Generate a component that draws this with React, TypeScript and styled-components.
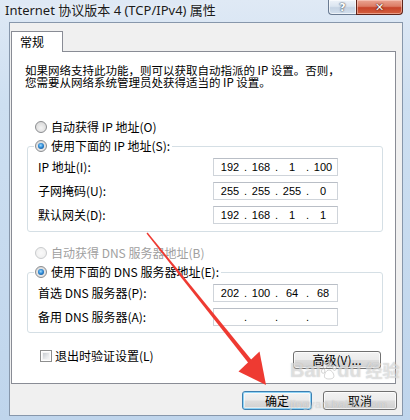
import styled, { createGlobalStyle } from "styled-components"

const GlobalStyle = createGlobalStyle`
  html, body {
    margin: 0;
    padding: 0;
    background: #ffffff;
  }
  body {
    font-family: "Noto Sans CJK SC", "Noto Sans", sans-serif;
    color: #000;
  }
`

const CJK = `"Noto Sans CJK SC", "Noto Sans", sans-serif`

interface IpProps {
  parts: string[]
}

const IpInput = ({ parts }: IpProps) => (
  <IpBox>
    {parts.map((p, i) => (
      <IpSegment key={i}>
        <Octet>{p}</Octet>
        {i < 3 && <Dot>.</Dot>}
      </IpSegment>
    ))}
  </IpBox>
)

interface RadioProps {
  label: string
  checked?: boolean
  disabled?: boolean
}

const Radio = ({ label, checked, disabled }: RadioProps) => (
  <RadioLabel $disabled={disabled}>
    <RadioCircle $checked={checked} $disabled={disabled} />
    {label}
  </RadioLabel>
)

const PawIcon = () => (
  <svg width="16" height="20" viewBox="0 0 16 20">
    <g fill="rgba(255,255,255,0.6)" stroke="rgba(140,140,140,0.45)" strokeWidth="0.8">
      <ellipse cx="4" cy="5" rx="2" ry="2.6" />
      <ellipse cx="9" cy="3.5" rx="2" ry="2.6" />
      <ellipse cx="13.5" cy="7" rx="1.8" ry="2.4" />
      <ellipse cx="2.2" cy="10" rx="1.7" ry="2.3" />
      <path d="M8 9 C11 9 14 14 12.5 16.5 C11 18.5 5 18.5 3.8 16.5 C2.5 14 5 9 8 9 Z" />
    </g>
  </svg>
)

const RedArrow = () => (
  <ArrowLayer width="410" height="420" viewBox="0 0 410 420">
    <polygon
      points="146.5,233.4 147.6,232.6 253.6,362.6 250.4,365.4"
      fill="#ee3a32"
    />
    <polygon points="266,385 238.5,371.5 259.5,351.5" fill="#ee3a32" />
  </ArrowLayer>
)

export default function App() {
  return (
    <>
      <GlobalStyle />
      <Window>
        <TitleBar>
          <Title>Internet 协议版本 4 (TCP/IPv4) 属性</Title>
          <CaptionButtons>
            <HelpButton>?</HelpButton>
            <CloseButton>✕</CloseButton>
          </CaptionButtons>
        </TitleBar>
        <Body>
          <TabStrip>
            <Tab>常规</Tab>
          </TabStrip>
          <Panel>
            <Description>
              <DescLine>如果网络支持此功能，则可以获取自动指派的 IP 设置。否则，</DescLine>
              <DescLine>您需要从网络系统管理员处获得适当的 IP 设置。</DescLine>
            </Description>
            <RadioRow $top={31}>
              <Radio label="自动获得 IP 地址(O)" />
            </RadioRow>
            <GroupBox $top={11} $height={86}>
              <Legend>
                <Radio label="使用下面的 IP 地址(S):" checked />
              </Legend>
              <FieldGrid>
                <FieldLabel>IP 地址(I):</FieldLabel>
                <IpInput parts={["192", "168", "1", "100"]} />
                <FieldLabel>子网掩码(U):</FieldLabel>
                <IpInput parts={["255", "255", "255", "0"]} />
                <FieldLabel>默认网关(D):</FieldLabel>
                <IpInput parts={["192", "168", "1", "1"]} />
              </FieldGrid>
            </GroupBox>
            <RadioRow $top={13}>
              <Radio label="自动获得 DNS 服务器地址(B)" disabled />
            </RadioRow>
            <GroupBox $top={11} $height={61}>
              <Legend>
                <Radio label="使用下面的 DNS 服务器地址(E):" checked />
              </Legend>
              <FieldGrid>
                <FieldLabel>首选 DNS 服务器(P):</FieldLabel>
                <IpInput parts={["202", "100", "64", "68"]} />
                <FieldLabel>备用 DNS 服务器(A):</FieldLabel>
                <IpInput parts={["", "", "", ""]} />
              </FieldGrid>
            </GroupBox>
            <OptionsRow>
              <CheckLabel>
                <CheckBox />
                退出时验证设置(L)
              </CheckLabel>
              <AdvancedButton>高级(V)...</AdvancedButton>
            </OptionsRow>
          </Panel>
          <Footer>
            <DialogButton $width={70} $default>确定</DialogButton>
            <DialogButton $width={74}>取消</DialogButton>
          </Footer>
        </Body>
        <Watermark>
          <WatermarkLogo>
            Bai
            <PawIcon />
            du
            <WatermarkCn>经验</WatermarkCn>
          </WatermarkLogo>
          <WatermarkUrl>jingyan.baidu.com</WatermarkUrl>
        </Watermark>
        <RedArrow />
      </Window>
    </>
  )
}

const Window = styled.div`
  position: relative;
  width: 410px;
  height: 420px;
  overflow: hidden;
  display: flex;
  flex-direction: column;
  background: linear-gradient(180deg, #dfe9f5 0%, #cddff1 25%, #bfd5ec 100%);
`

const TitleBar = styled.div`
  height: 22px;
  flex: none;
  display: flex;
  align-items: flex-start;
`

const Title = styled.div`
  padding-left: 5px;
  font-family: "Noto Sans", ${CJK};
  font-size: 13px;
  line-height: 20px;
  color: #1b1b1b;
  text-shadow: 0 0 6px rgba(255, 255, 255, 0.9);
  white-space: nowrap;
`

const CaptionButtons = styled.div`
  margin-left: auto;
  margin-right: 7px;
  display: flex;
`

const CaptionBase = styled.div`
  height: 15px;
  box-sizing: border-box;
  display: flex;
  align-items: center;
  justify-content: center;
  color: #ffffff;
  font-family: "DejaVu Sans", sans-serif;
  font-weight: bold;
  font-size: 11px;
  line-height: 1;
`

const HelpButton = styled(CaptionBase)`
  width: 28px;
  border: 1px solid #6a7b92;
  border-top: none;
  border-right: none;
  border-radius: 0 0 0 4px;
  background: linear-gradient(180deg, #eef3f9 0%, #dbe5f0 45%, #c5d3e3 55%, #d3e0ee 100%);
  box-shadow: inset 0 0 0 1px rgba(255, 255, 255, 0.6);
  text-shadow: 0 0 1px #3a4657, 0 0 2px #3a4657;
`

const CloseButton = styled(CaptionBase)`
  width: 47px;
  border: 1px solid #5e241a;
  border-top: none;
  border-radius: 0 0 4px 0;
  background: linear-gradient(180deg, #eaa493 0%, #dc7c65 45%, #c7432a 55%, #d4613f 100%);
  box-shadow: inset 0 0 0 1px rgba(255, 220, 210, 0.5);
  text-shadow: 0 0 1px #4a1208, 0 0 2px #4a1208;
  font-size: 11px;
`

const Body = styled.div`
  flex: 1;
  margin: 0 7px 4px 9px;
  background: #f0f0f0;
  border: 1px solid #8797ab;
  display: flex;
  flex-direction: column;
`

const TabStrip = styled.div`
  display: flex;
  padding: 8px 0 0 1px;
`

const Tab = styled.div`
  position: relative;
  z-index: 1;
  width: 52px;
  height: 21px;
  box-sizing: border-box;
  margin-bottom: -1px;
  padding-left: 8px;
  border: 1px solid #898c95;
  border-bottom: none;
  background: #ffffff;
  font-size: 12px;
  line-height: 20px;
`

const Panel = styled.div`
  margin-left: 1px;
  width: 385px;
  height: 333px;
  box-sizing: border-box;
  border: 1px solid #898c95;
  background: #ffffff;
  display: flex;
  flex-direction: column;
`

const Description = styled.div`
  margin: 12px 0 0 13px;
  display: flex;
  flex-direction: column;
`

const DescLine = styled.div`
  height: 12px;
  font-size: 11.5px;
  line-height: 12px;
  white-space: nowrap;
`

const RadioRow = styled.div<{ $top: number }>`
  margin: ${({ $top }) => $top}px 0 0 23px;
  height: 16px;
  display: flex;
`

const RadioLabel = styled.div<{ $disabled?: boolean }>`
  display: flex;
  align-items: center;
  gap: 4px;
  height: 16px;
  font-size: 12px;
  line-height: 16px;
  white-space: nowrap;
  color: ${({ $disabled }) => ($disabled ? "#a0a0a0" : "#000000")};
`

const RadioCircle = styled.span<{ $checked?: boolean; $disabled?: boolean }>`
  flex: none;
  width: 12px;
  height: 12px;
  box-sizing: border-box;
  border-radius: 50%;
  border: 1px solid ${({ $disabled }) => ($disabled ? "#c9cbcd" : "#8b8d90")};
  background: ${({ $disabled }) =>
    $disabled
      ? "radial-gradient(circle, #fafafa 0%, #ececec 100%)"
      : "radial-gradient(circle at 50% 60%, #f4f4f4 0%, #dcdcdc 70%, #cfcfcf 100%)"};
  display: flex;
  align-items: center;
  justify-content: center;

  &::after {
    content: "";
    display: ${({ $checked }) => ($checked ? "block" : "none")};
    width: 6px;
    height: 6px;
    border-radius: 50%;
    background: radial-gradient(circle at 45% 40%, #9fdcff 0%, #2f8ad6 45%, #0b3f7a 100%);
  }
`

const GroupBox = styled.div<{ $top: number; $height: number }>`
  margin: ${({ $top }) => $top}px 0 0 15px;
  width: 356px;
  height: ${({ $height }) => $height}px;
  box-sizing: border-box;
  border: 1px solid #d5dfe5;
  border-radius: 3px;
  display: flex;
  flex-direction: column;
`

const Legend = styled.div`
  align-self: flex-start;
  margin: -9px 0 0 6px;
  padding: 0 2px 0 1px;
  background: #ffffff;
`

const FieldGrid = styled.div`
  margin: 4px 0 0 10px;
  display: grid;
  grid-template-columns: 175px 125px;
  grid-auto-rows: 18px;
  row-gap: 6px;
  align-items: center;
`

const FieldLabel = styled.div`
  font-size: 12px;
  line-height: 16px;
  white-space: nowrap;
`

const IpBox = styled.div`
  height: 18px;
  box-sizing: border-box;
  border: 1px solid #cfd4da;
  border-top-color: #b9bec6;
  display: flex;
  padding-left: 3px;
  font-family: "Liberation Sans", sans-serif;
  font-size: 11px;
  line-height: 16px;
  color: #000000;
`

const IpSegment = styled.div`
  display: flex;
`

const Octet = styled.span`
  width: 26px;
  text-align: center;
`

const Dot = styled.span`
  width: 5px;
  text-align: center;
`

const OptionsRow = styled.div`
  margin: 15px 14px 0 28px;
  display: flex;
  align-items: flex-start;
`

const CheckLabel = styled.div`
  display: flex;
  align-items: center;
  gap: 3px;
  height: 16px;
  font-size: 12px;
  line-height: 16px;
`

const CheckBox = styled.span`
  flex: none;
  width: 12px;
  height: 12px;
  box-sizing: border-box;
  border: 1px solid #8e8f8f;
  background: #f4f4f4;
  box-shadow: inset 0 0 0 1px #ffffff;
  position: relative;

  &::after {
    content: "";
    position: absolute;
    inset: 2px;
    background: linear-gradient(135deg, #c8ccd1 0%, #e6e8ea 60%, #f4f5f6 100%);
  }
`

const ButtonBase = styled.div`
  height: 19px;
  box-sizing: border-box;
  border: 1px solid #707070;
  border-radius: 3px;
  background: linear-gradient(180deg, #f3f3f3 0%, #ebebeb 48%, #dddddd 52%, #cfcfcf 100%);
  box-shadow: inset 0 0 0 1px rgba(255, 255, 255, 0.75);
  display: flex;
  align-items: center;
  justify-content: center;
  font-size: 12px;
  line-height: 16px;
  white-space: nowrap;
`

const AdvancedButton = styled(ButtonBase)`
  margin-left: auto;
  margin-top: 3px;
  width: 88px;
  height: 18px;
`

const Footer = styled.div`
  margin-top: 7px;
  padding-right: 5px;
  display: flex;
  justify-content: flex-end;
  gap: 11px;
`

const DialogButton = styled(ButtonBase)<{ $width: number; $default?: boolean }>`
  width: ${({ $width }) => $width}px;
  border-color: ${({ $default }) => ($default ? "#3c7fb1" : "#707070")};
  box-shadow: ${({ $default }) =>
    $default
      ? "inset 0 0 0 1px #8fd3f5, inset 0 0 0 2px rgba(255,255,255,0.5)"
      : "inset 0 0 0 1px rgba(255,255,255,0.75)"};
`

const Watermark = styled.div`
  position: absolute;
  left: 290px;
  top: 359px;
  pointer-events: none;
  display: flex;
  flex-direction: column;
`

const WatermarkLogo = styled.div`
  display: flex;
  align-items: flex-end;
  font-family: "Liberation Sans", sans-serif;
  font-weight: bold;
  font-size: 20px;
  line-height: 22px;
  color: rgba(255, 255, 255, 0.5);
  text-shadow: 0 0 1px rgba(120, 120, 120, 0.5);
`

const WatermarkCn = styled.span`
  margin-left: 4px;
  font-family: ${CJK};
  font-size: 17px;
  font-weight: bold;
`

const WatermarkUrl = styled.div`
  margin-top: 17px;
  font-family: "Liberation Sans", sans-serif;
  font-size: 11px;
  letter-spacing: 0.5px;
  color: rgba(255, 255, 255, 0.45);
  text-shadow: 0 0 1px rgba(120, 120, 120, 0.45);
`

const ArrowLayer = styled.svg`
  position: absolute;
  left: 0;
  top: 0;
  pointer-events: none;
`
